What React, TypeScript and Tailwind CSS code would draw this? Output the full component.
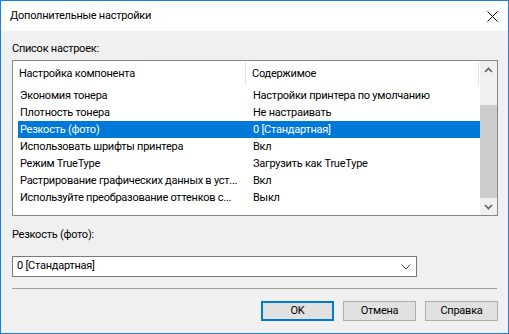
import React from "react";

const rows = [
  ["Экономия тонера", "Настройки принтера по умолчанию"],
  ["Плотность тонера", "Не настраивать"],
  ["Резкость (фото)", "0 [Стандартная]"],
  ["Использовать шрифты принтера", "Вкл"],
  ["Режим TrueType", "Загрузить как TrueType"],
  ["Растрирование графических данных в уст...", "Вкл"],
  ["Используйте преобразование оттенков с...", "Выкл"],
];

const selected = 2;

function Chevron({ up }: { up?: boolean }) {
  return (
    <svg width="9" height="6" viewBox="0 0 9 6">
      <path
        d={up ? "M1 5 L4.5 1.5 L8 5" : "M1 1 L4.5 4.5 L8 1"}
        fill="none"
        stroke="#606060"
        strokeWidth="1.6"
      />
    </svg>
  );
}

export default function App() {
  return (
    <div
      className="w-[509px] h-[334px] border border-[#1c7fd6] bg-[#f0f0f0] flex flex-col text-[11px] tracking-[-0.25px] text-black overflow-hidden"
      style={{ fontFamily: 'Roboto, "Liberation Sans", sans-serif' }}
    >
      {/* title bar */}
      <div className="h-[30px] bg-white flex items-center justify-between pl-[9px] pr-[10px] shrink-0">
        <span className="text-[11px]">Дополнительные настройки</span>
        <svg width="11" height="11" viewBox="0 0 11 11">
          <path d="M0.5 0.5 L10.5 10.5 M10.5 0.5 L0.5 10.5" stroke="#000" strokeWidth="1" />
        </svg>
      </div>

      <div className="flex flex-col pl-[11px]">
        <div className="mt-[10px] h-[16px] leading-[16px]">Список настроек:</div>

        {/* list view */}
        <div className="mt-[3px] w-[486px] h-[156px] border border-[#828790] bg-white flex">
          <div className="flex-1 flex flex-col">
            <div className="h-[25px] flex items-stretch">
              <div className="w-[233px] flex items-center pl-[6px] pt-[1px] border-r border-[#e5e5e5] my-[1px]">
                Настройка компонента
              </div>
              <div className="flex-1 flex items-center pl-[6px] pt-[1px] border-r border-[#e5e5e5] my-[1px] mr-[1px]">
                Содержимое
              </div>
            </div>
            <div className="pl-[5px] pt-[1px] flex flex-col">
              {rows.map((r, i) => (
                <div
                  key={i}
                  className={
                    "h-[17px] flex items-center pt-[1px] " +
                    (i === selected ? "bg-[#0078d7] text-white" : "")
                  }
                >
                  <div className="w-[235px] pl-[2px] pr-[2px] whitespace-nowrap overflow-hidden">{r[0]}</div>
                  <div className="flex-1 whitespace-nowrap overflow-hidden">{r[1]}</div>
                </div>
              ))}
            </div>
          </div>
          {/* scrollbar */}
          <div className="w-[17px] bg-[#f0f0f0] flex flex-col">
            <div className="h-[17px] flex items-center justify-center">
              <Chevron up />
            </div>
            <div className="flex-1 flex flex-col pt-[27px]">
              <div className="flex-1 bg-[#cdcdcd]" />
            </div>
            <div className="h-[17px] flex items-center justify-center">
              <Chevron />
            </div>
          </div>
        </div>

        <div className="mt-[11px] h-[16px] leading-[16px]">Резкость (фото):</div>

        {/* combo box */}
        <div className="mt-[13px] w-[405px] h-[21px] border border-[#7a7a7a] bg-white flex items-center justify-between pl-[4px] pr-[5px]">
          <span>0 [Стандартная]</span>
          <svg width="10" height="6" viewBox="0 0 10 6">
            <path d="M0.5 0.5 L5 5 L9.5 0.5" fill="none" stroke="#444" strokeWidth="1" />
          </svg>
        </div>

        <div className="mt-[11px] w-[485px] h-[1px] bg-[#a0a0a0]" />

        {/* buttons */}
        <div className="mt-[12px] w-[486px] flex justify-end gap-[9px]">
          <button className="w-[73px] h-[20px] border-2 border-[#0078d7] bg-[#e1e1e1] flex items-center justify-center">
            OK
          </button>
          <button className="w-[73px] h-[20px] border border-[#adadad] bg-[#e1e1e1] flex items-center justify-center">
            Отмена
          </button>
          <button className="w-[73px] h-[20px] border border-[#adadad] bg-[#e1e1e1] flex items-center justify-center">
            Справка
          </button>
        </div>
      </div>
    </div>
  );
}
